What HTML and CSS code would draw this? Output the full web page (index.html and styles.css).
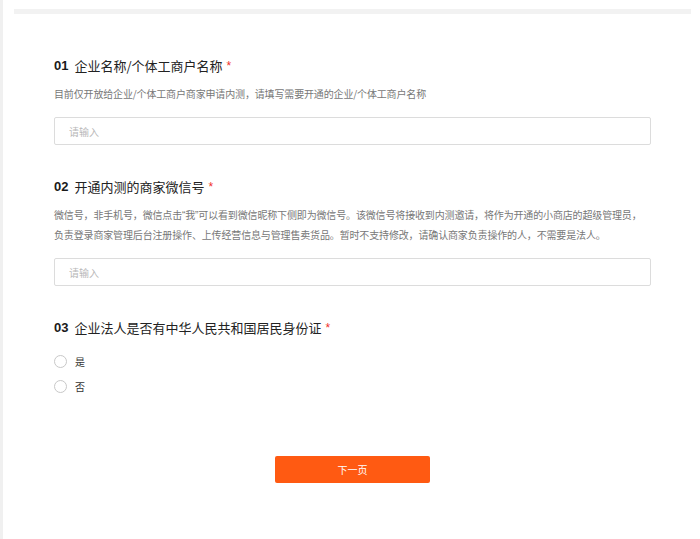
FILE: index.html
```html
<!DOCTYPE html>
<html lang="zh-CN">
<head>
<meta charset="utf-8">
<title>表单</title>
<link rel="stylesheet" href="styles.css">
</head>
<body>
<div class="page">
  <div class="topbar"></div>
  <form class="form">
    <section class="field">
      <h2 class="q"><span class="num">01</span><span class="title">企业名称/个体工商户名称</span><span class="req">*</span></h2>
      <p class="desc">目前仅开放给企业/个体工商户商家申请内测，请填写需要开通的企业/个体工商户名称</p>
      <input class="input" type="text" placeholder="请输入">
    </section>
    <section class="field">
      <h2 class="q"><span class="num">02</span><span class="title">开通内测的商家微信号</span><span class="req">*</span></h2>
      <p class="desc">微信号，非手机号，微信点击<span class="quote">“</span>我<span class="quote">”</span>可以看到微信昵称下侧即为微信号。该微信号将接收到内测邀请，将作为开通的小商店的超级管理员，<br>负责登录商家管理后台注册操作、上传经营信息与管理售卖货品。暂时不支持修改，请确认商家负责操作的人，不需要是法人。</p>
      <input class="input" type="text" placeholder="请输入">
    </section>
    <section class="field">
      <h2 class="q"><span class="num">03</span><span class="title">企业法人是否有中华人民共和国居民身份证</span><span class="req">*</span></h2>
      <div class="radios">
        <label class="radio"><span class="circle"></span><span class="rlabel">是</span></label>
        <label class="radio"><span class="circle"></span><span class="rlabel">否</span></label>
      </div>
    </section>
    <div class="actions">
      <button type="button" class="btn">下一页</button>
    </div>
  </form>
</div>
</body>
</html>
```
FILE: styles.css
```css
html, body {
  margin: 0;
  padding: 0;
  height: 100%;
  background: #ffffff;
}
body {
  font-family: "Noto Sans CJK SC", "Noto Sans", sans-serif;
  color: #222;
}
.page {
  min-height: 100%;
  box-sizing: border-box;
  border-left: 3px solid #f0f0f0;
  overflow: hidden;
}
.topbar {
  height: 5px;
  margin: 9px 9px 0 11px;
  background: #f2f2f2;
}
.form {
  width: 597px;
  margin: 42px 0 0 51px;
}
.field {
  margin-bottom: 32px;
}
.q {
  margin: 0;
  height: 20px;
  line-height: 20px;
  font-size: 13px;
  font-weight: normal;
  color: #222;
  display: flex;
  align-items: center;
  white-space: nowrap;
}
.num {
  font-family: "Liberation Sans", Arial, sans-serif;
  font-weight: bold;
  font-size: 13px;
  margin-right: 6px;
  color: #1a1a1a;
}
.title {
  font-size: 13px;
}
.req {
  color: #f0312b;
  margin-left: 4px;
  font-size: 12px;
  font-family: "Liberation Sans", Arial, sans-serif;
}
.desc {
  margin: 8px 0 0 0;
  font-size: 10px;
  line-height: 19px;
  color: #777;
  white-space: nowrap;
  letter-spacing: -0.15px;
}
.quote {
  font-family: "Liberation Sans", Arial, sans-serif;
}
.input {
  display: block;
  box-sizing: border-box;
  width: 597px;
  height: 28px;
  margin: 14px 0 0 0;
  padding: 0 14px;
  border: 1px solid #dcdcdc;
  border-radius: 2px;
  font-family: "Noto Sans CJK SC", sans-serif;
  font-size: 10px;
  outline: none;
  background: #fff;
}
.input::placeholder {
  color: #b8b8b8;
}
.radios {
  margin-top: 11px;
  display: flex;
  flex-direction: column;
}
.radio {
  height: 25px;
  display: flex;
  align-items: center;
}
.circle {
  box-sizing: border-box;
  width: 13px;
  height: 13px;
  border: 1px solid #c8c8c8;
  border-radius: 50%;
  background: #fff;
}
.rlabel {
  margin-left: 8px;
  font-size: 10px;
  color: #333;
}
.actions {
  display: flex;
  justify-content: center;
  margin-top: 57px;
}
.btn {
  width: 155px;
  height: 27px;
  border: none;
  border-radius: 2px;
  background: #ff5a12;
  color: #fff;
  font-family: "Noto Sans CJK SC", sans-serif;
  font-size: 10px;
  cursor: pointer;
}
```
